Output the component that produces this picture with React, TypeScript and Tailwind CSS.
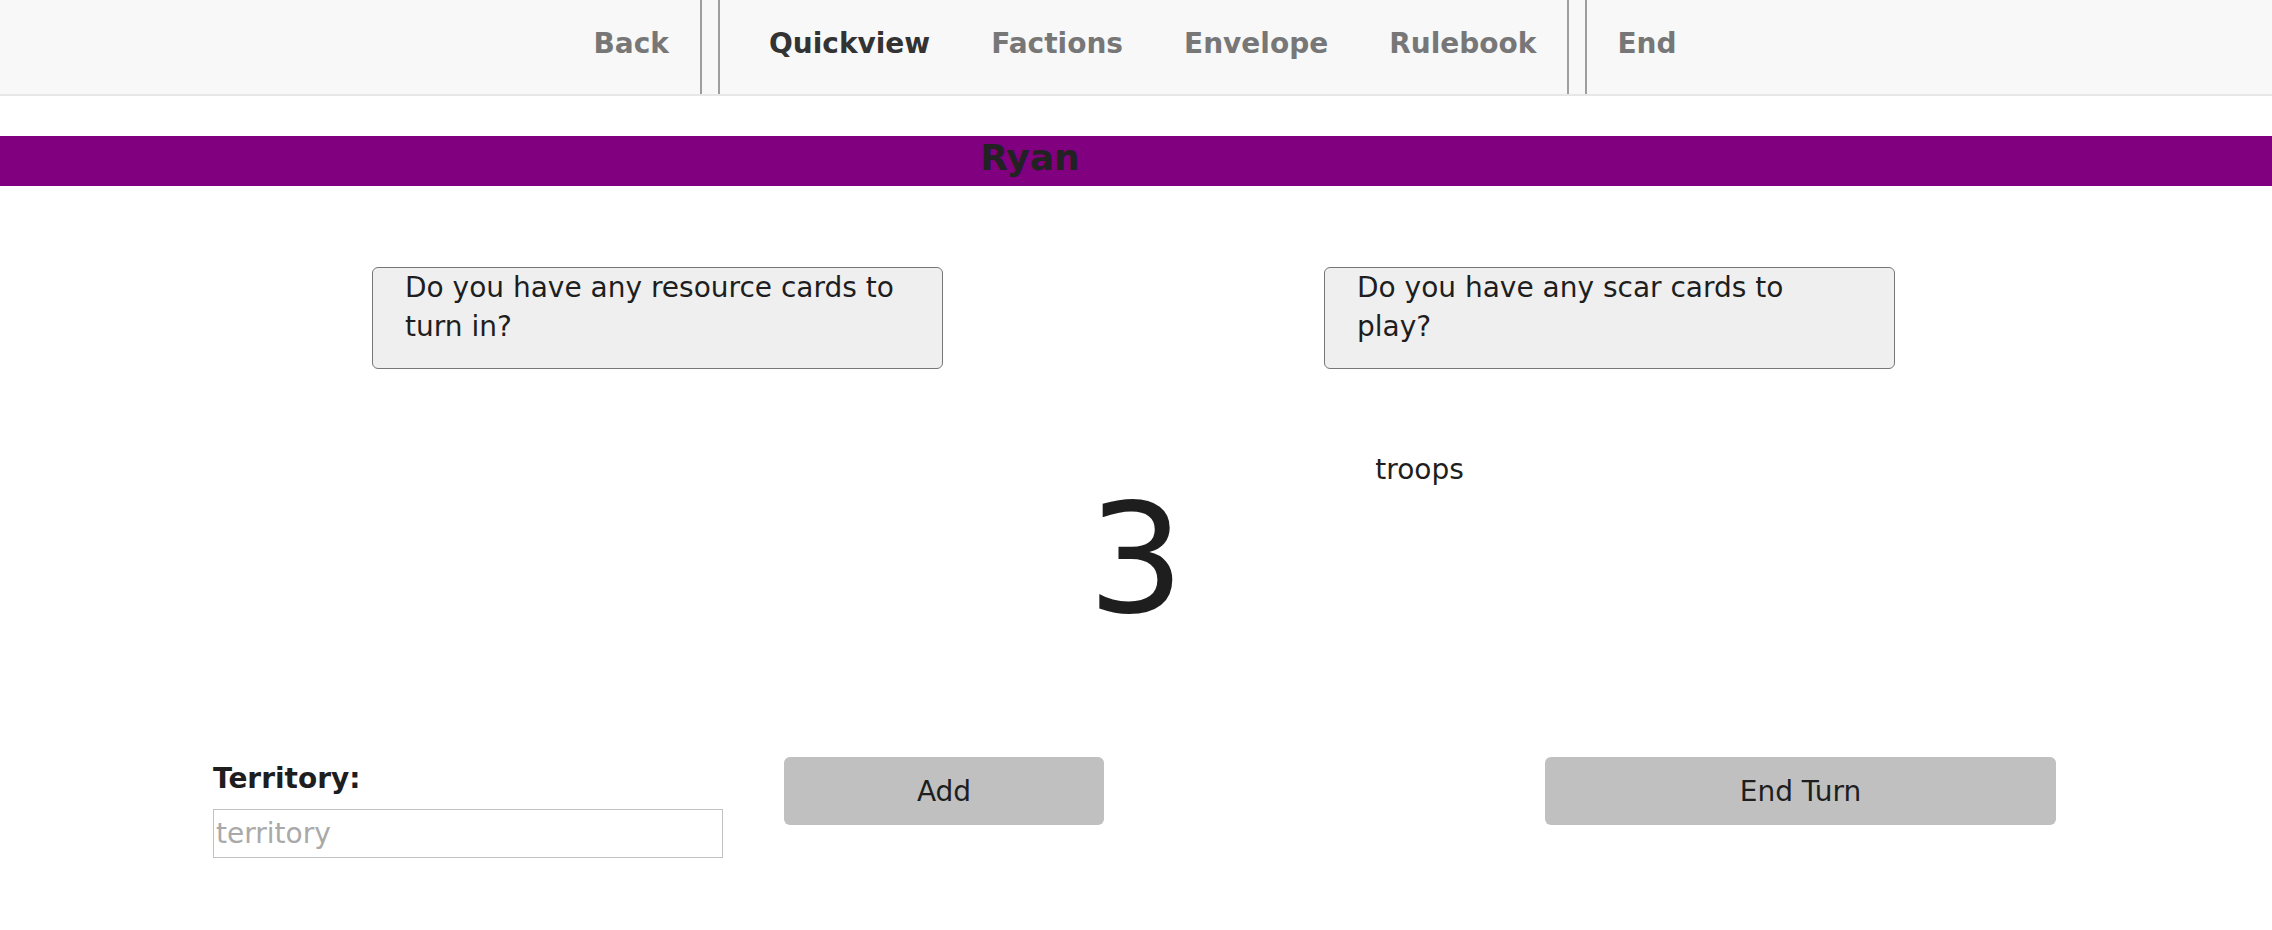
import React from "react";

const font = { fontFamily: '"DejaVu Sans", Verdana, sans-serif' };

function Sep() {
  return <div className="w-[2px] self-stretch bg-[#9e9e9e]" />;
}

function NavItem({ label, active, className }: { label: string; active?: boolean; className?: string }) {
  return (
    <div
      className={`pt-[27px] text-[28px] leading-[33px] font-bold ${active ? "text-[#333333]" : "text-[#777777]"} ${className ?? ""}`}
    >
      {label}
    </div>
  );
}

export default function App() {
  return (
    <div className="min-h-[930px] w-full bg-white text-[#1e1e1e]" style={font}>
      <nav className="flex h-[96px] justify-center border-b-2 border-[#e7e7e7] bg-[#f8f8f8] pr-[2px]">
        <NavItem label="Back" className="mr-[31px]" />
        <Sep />
        <div className="ml-[16px] flex">
          <Sep />
        </div>
        <NavItem label="Quickview" active className="ml-[49px]" />
        <NavItem label="Factions" className="ml-[61px]" />
        <NavItem label="Envelope" className="ml-[61px]" />
        <NavItem label="Rulebook" className="ml-[61px]" />
        <div className="ml-[31px] flex">
          <Sep />
        </div>
        <div className="ml-[16px] flex">
          <Sep />
        </div>
        <NavItem label="End" className="ml-[30px]" />
      </nav>

      <div className="mt-[40px] h-[50px] bg-[#800080] pr-[212px] text-center">
        <h1 className="text-[36px] font-bold leading-[44px] text-[#222222]">Ryan</h1>
      </div>

      <div className="mt-[81px] flex justify-center gap-[381px] pr-[5px]">
        <div className="h-[102px] w-[571px] rounded-[6px] border border-[#777777] bg-[#efefef] pl-[32px] pr-[34px] text-[28px] leading-[39px] text-[#1e1e1e]">
          Do you have any resource cards to turn in?
        </div>
        <div className="h-[102px] w-[571px] rounded-[6px] border border-[#777777] bg-[#efefef] pl-[32px] pr-[34px] text-[28px] leading-[39px] text-[#1e1e1e]">
          Do you have any scar cards to play?
        </div>
      </div>

      <div className="mt-[81px] grid grid-cols-[1fr_auto_1fr] items-start">
        <div />
        <div className="mt-[22px] text-[152px] leading-[176px] text-[#1e1e1e]">3</div>
        <div className="pl-[191px] text-[28px] leading-[39px] text-[#1e1e1e]">troops</div>
      </div>

      <div className="mt-[109px] flex items-start pl-[213px]">
        <div className="flex w-[510px] flex-col">
          <label className="mt-[2px] text-[28px] font-bold leading-[39px] text-[#1e1e1e]">Territory:</label>
          <input
            placeholder="territory"
            className="mt-[11px] h-[49px] w-full border border-[#c2c2c2] px-[2px] text-[28px] text-[#1e1e1e] outline-none placeholder:text-[#a9a9a9]"
            style={font}
          />
        </div>
        <button
          className="ml-[61px] flex h-[68px] w-[320px] items-center justify-center rounded-[6px] bg-[#c0c0c0] text-[28px] leading-[39px] text-[#1e1e1e]"
          style={font}
        >
          Add
        </button>
        <button
          className="ml-[441px] flex h-[68px] w-[511px] items-center justify-center rounded-[6px] bg-[#c0c0c0] text-[28px] leading-[39px] text-[#1e1e1e]"
          style={font}
        >
          End Turn
        </button>
      </div>
    </div>
  );
}
